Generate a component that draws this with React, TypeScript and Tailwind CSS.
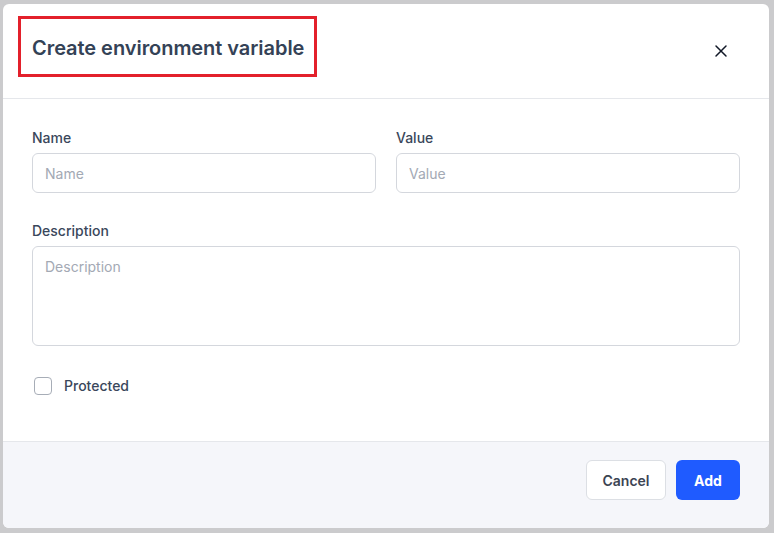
export default function App() {
	return (
		<div className="w-[774px] h-[533px] bg-[#cbcbcd] pt-[4px] pl-[3px] font-['Inter',sans-serif]">
			<div className="w-[766px] h-[524px] bg-white rounded-[6px] overflow-hidden flex flex-col">
				{/* header */}
				<div className="h-[95px] border-b border-[#e5e7eb] flex items-start justify-between pl-[15px] pr-[41px] pt-[12px]">
					<div className="border-[3px] border-[#e3202b] pl-[11px] pr-[10px] pt-[3px] h-[61px] flex items-center">
						<h2 className="text-[20px] font-semibold text-[#344256] tracking-[-0.05px]">Create environment variable</h2>
					</div>
					<button className="mt-[28px] text-[#111827]">
						<svg width="14" height="14" viewBox="0 0 14 14" fill="none" stroke="currentColor" strokeWidth="1.5" strokeLinecap="round">
							<path d="M2 2L12 12M12 2L2 12" />
						</svg>
					</button>
				</div>

				{/* body */}
				<div className="flex-1 px-[29px] pt-[29px]">
					<div className="grid grid-cols-2 gap-x-[20px]">
						<div>
							<label className="block text-[14px] font-medium text-[#3a475b] leading-[20px] mb-[5px]">Name</label>
							<input placeholder="Name" className="w-full h-[40px] rounded-[6px] border border-[#d4d7dd] px-[12px] text-[14px] placeholder:text-[#a3a9b4] outline-none" />
						</div>
						<div>
							<label className="block text-[14px] font-medium text-[#3a475b] leading-[20px] mb-[5px]">Value</label>
							<input placeholder="Value" className="w-full h-[40px] rounded-[6px] border border-[#d4d7dd] px-[12px] text-[14px] placeholder:text-[#a3a9b4] outline-none" />
						</div>
					</div>
					<div className="mt-[28px]">
						<label className="block text-[14px] font-medium text-[#3a475b] leading-[20px] mb-[5px]">Description</label>
						<textarea placeholder="Description" className="w-full h-[100px] resize-none rounded-[6px] border border-[#d4d7dd] px-[12px] py-[9px] text-[14px] placeholder:text-[#a3a9b4] outline-none block" />
					</div>
					<label className="flex items-center mt-[29px] ml-[2px]">
						<span className="w-[18px] h-[18px] rounded-[4px] border border-[#a7adb7] bg-white" />
						<span className="ml-[12px] text-[14px] font-medium text-[#3a475b]">Protected</span>
					</label>
				</div>

				{/* footer */}
				<div className="h-[87px] border-t border-[#e5e7eb] bg-[#f5f6fa] flex justify-end items-start gap-[10px] pt-[18px] pr-[29px]">
					<button className="w-[80px] h-[40px] rounded-[6px] border border-[#dcdfe4] bg-white text-[14px] font-semibold text-[#3b4453]">Cancel</button>
					<button className="w-[64px] h-[40px] rounded-[6px] bg-[#1f5bff] text-[14px] font-bold text-white">Add</button>
				</div>
			</div>
		</div>
	);
}
